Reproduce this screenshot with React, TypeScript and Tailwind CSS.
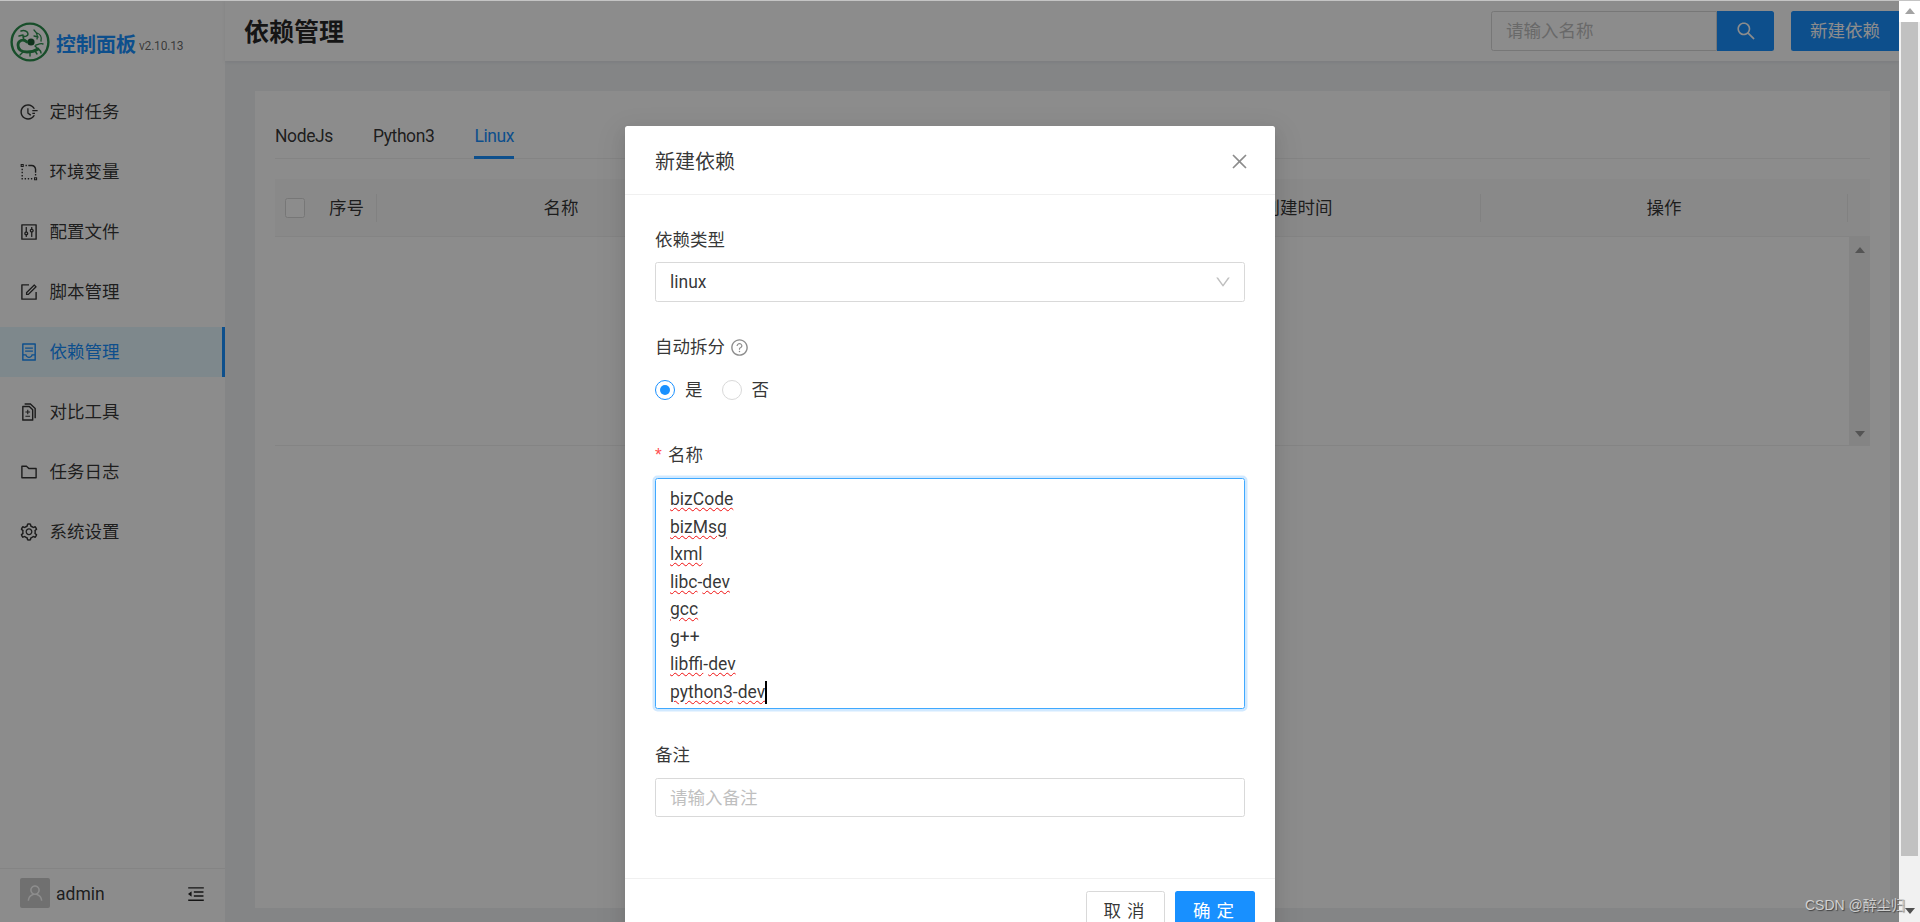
import {
  AiOutlineClose, AiOutlineContainer, AiOutlineControl, AiOutlineDiff, AiOutlineDown,
  AiOutlineFieldTime, AiOutlineFolder, AiOutlineForm, AiOutlineMenuFold, AiOutlineQuestionCircle,
  AiOutlineRadiusSetting, AiOutlineSearch, AiOutlineSetting, AiOutlineUser,
} from "react-icons/ai";

const menu = [
  { label: "定时任务", icon: AiOutlineFieldTime },
  { label: "环境变量", icon: AiOutlineRadiusSetting },
  { label: "配置文件", icon: AiOutlineControl },
  { label: "脚本管理", icon: AiOutlineForm },
  { label: "依赖管理", icon: AiOutlineContainer, active: true },
  { label: "对比工具", icon: AiOutlineDiff },
  { label: "任务日志", icon: AiOutlineFolder },
  { label: "系统设置", icon: AiOutlineSetting },
];

function Logo() {
  return (
    <svg width="40" height="40" viewBox="0 0 40 40" fill="none" stroke="#2c8f4e" strokeLinecap="round">
      <circle cx="20" cy="20" r="18.4" strokeWidth="2.4" />
      <circle cx="21" cy="20" r="3.6" fill="#1d5c33" stroke="none" />
      <path d="M17 20c-4-4-9-1-9 3 0 5 4 7 9 7s8-1 11-3" strokeWidth="2.8" />
      <path d="M11 9c3-1 7 0 7 3 0 2-3 3-5 2 M13 14c0 3 1 4 3 5 M9 14l4-1" strokeWidth="1.5" />
      <path d="M24 8c3 3 4 6 3 9 M27 11c3 1 5 4 4 8 M24 14l4 1" strokeWidth="1.3" />
      <path d="M26 23c3-1 5-2 7-1 M28 27c2 1 3 3 3 4 M13 30l-3 3 M20 30l0 4 M25 29l2 3 M25 24l3 3" strokeWidth="1.4" />
    </svg>
  );
}

function Sidebar() {
  return (
    <aside className="w-[225px] h-full shrink-0 flex flex-col bg-white">
      <div className="h-[87px] pt-[22px] pl-[10px] flex items-start">
        <Logo />
        <span className="ml-[6px] mt-[11px] text-[20px] leading-[24px] font-bold text-[#1890ff]">控制面板</span>
        <span className="ml-[3px] mt-[16px] text-[12px] leading-[16px] tracking-[-0.2px] text-black/60">v2.10.13</span>
      </div>
      <nav className="flex-1">
        {menu.map(m => (
          <div key={m.label}
            className={`h-[50px] mb-[10px] pl-[19px] flex items-center gap-[10.5px] text-[17.5px] ${m.active ? "bg-[#e6f7ff] border-r-[3px] border-[#1890ff] text-[#1890ff]" : "text-black/80"}`}>
            <m.icon size={20} />
            <span>{m.label}</span>
          </div>
        ))}
      </nav>
      <div className="h-[54px] border-t border-[#f0f0f0] pl-[20px] pr-[19px] pt-[9px] flex items-start">
        <div className="w-[30px] h-[30px] rounded-[2px] bg-[#ccc] flex items-center justify-center text-white">
          <AiOutlineUser size={20} />
        </div>
        <span className="ml-[6px] pt-[1px] text-[17.5px] leading-[30px] text-black/80">admin</span>
        <AiOutlineMenuFold size={20} className="ml-auto mt-[6px] text-black/85" />
      </div>
    </aside>
  );
}

function Sep() {
  return <div className="w-px h-[28px] bg-black/[0.06] shrink-0" />;
}

function Arrow({ up, className }: { up?: boolean; className?: string }) {
  return (
    <svg width="10" height="6" viewBox="0 0 10 6" className={className} fill="currentColor">
      <path d={up ? "M5 0l5 6H0z" : "M0 0h10L5 6z"} />
    </svg>
  );
}

function Content() {
  return (
    <main className="flex-1 min-w-0 h-full flex flex-col bg-[#f0f2f5]">
      <header className="h-[61px] shrink-0 bg-white shadow-[0_1px_4px_rgba(0,21,41,0.08)] flex items-center pl-[19px]">
        <h1 className="pt-[4px] text-[25px] font-bold text-black/85">依赖管理</h1>
        <div className="ml-auto flex items-center w-[283px] h-[40px]">
          <div className="flex-1 h-full border border-[#d9d9d9] rounded-l-[2.5px] bg-white pl-[14px] text-[17.5px] leading-[38px] text-[#bfbfbf]">请输入名称</div>
          <div className="w-[57px] h-full bg-[#1890ff] rounded-r-[2.5px] flex items-center justify-center text-white">
            <AiOutlineSearch size={22} />
          </div>
        </div>
        <div className="ml-[17px] w-[108px] h-[40px] shrink-0 bg-[#1890ff] rounded-l-[2.5px] pl-[19px] text-[17.5px] leading-[40px] text-white whitespace-nowrap">新建依赖</div>
      </header>
      <div className="flex-1 pt-[30px] pl-[30px] pr-[9px] pb-[14px]">
        <div className="h-full bg-white px-[20px]">
          <div className="h-[68px] flex items-end gap-[40px] border-b border-[#f0f0f0] text-[17.5px] tracking-[-0.4px]">
            <div className="h-[36px] -mb-px pb-[7px] flex items-center border-b-[3px] border-transparent text-black/80">NodeJs</div>
            <div className="h-[36px] -mb-px pb-[7px] flex items-center border-b-[3px] border-transparent text-black/80">Python3</div>
            <div className="h-[36px] -mb-px pb-[7px] flex items-center border-b-[3px] border-[#1890ff] text-[#1890ff]">Linux</div>
          </div>
          <div className="mt-[20px] h-[58px] bg-[#fafafa] border-b border-[#f0f0f0] flex items-center text-[17.5px] text-black/80">
            <div className="w-[54px] pl-[10px] shrink-0">
              <div className="w-[20px] h-[20px] rounded-[2.5px] border border-[#d9d9d9] bg-white" />
            </div>
            <div className="w-[47px] shrink-0 pt-[2px]">序号</div>
            <Sep />
            <div className="w-[368px] shrink-0 text-center pt-[2px]">名称</div>
            <div className="w-[370px] shrink-0" />
            <div className="w-[365px] shrink-0 text-center pt-[2px]">创建时间</div>
            <Sep />
            <div className="w-[366px] shrink-0 text-center pt-[2px]">操作</div>
            <Sep />
          </div>
          <div className="h-[209px] flex border-b border-[#f0f0f0]">
            <div className="flex-1" />
            <div className="w-[21px] -mt-px h-[210px] bg-[#f1f1f1] flex flex-col items-center justify-between pt-[11px] pb-[9px] text-[#9a9a9a]">
              <Arrow up />
              <Arrow />
            </div>
          </div>
        </div>
      </div>
    </main>
  );
}

function Label({ children, className }: { children: React.ReactNode; className?: string }) {
  return <div className={`h-[27px] pt-[2px] flex items-center text-[17.5px] text-black/80 ${className ?? ""}`}>{children}</div>;
}

function Squiggle({ children }: { children: React.ReactNode }) {
  return <span className="underline decoration-wavy decoration-[#f01010] decoration-[1.2px] underline-offset-[2px]">{children}</span>;
}

function Modal() {
  return (
    <div className="absolute left-[625px] top-[126px] w-[650px] bg-white rounded-[2.5px] shadow-[0_3px_6px_-4px_rgba(0,0,0,0.12),0_6px_16px_rgba(0,0,0,0.08),0_9px_28px_8px_rgba(0,0,0,0.05)]">
      <div className="h-[69px] border-b border-[#f0f0f0] pl-[30px] pr-[25px] flex items-center justify-between">
        <span className="pt-[3px] text-[20px] text-black/80">新建依赖</span>
        <AiOutlineClose size={21} className="mt-[2px] text-black/45" />
      </div>
      <div className="px-[30px] pt-[31px]">
        <Label className="mb-[9px]">依赖类型</Label>
        <div className="h-[40px] border border-[#d9d9d9] rounded-[2.5px] pl-[14px] pr-[12px] flex items-center justify-between text-[17.5px] text-black/80">
          <span className="pt-[1px]">linux</span>
          <AiOutlineDown size={18} className="text-black/25" />
        </div>

        <Label className="mt-[31px] mb-[10px]">
          自动拆分
          <AiOutlineQuestionCircle size={19} className="ml-[5px] text-black/45" />
        </Label>
        <div className="h-[40px] flex items-center text-[17.5px] text-black/80">
          <div className="w-[20px] h-[20px] rounded-full border border-[#1890ff] flex items-center justify-center">
            <div className="w-[10px] h-[10px] rounded-full bg-[#1890ff]" />
          </div>
          <span className="ml-[10px]">是</span>
          <div className="ml-[19px] w-[20px] h-[20px] rounded-full border border-[#d9d9d9]" />
          <span className="ml-[10px]">否</span>
        </div>

        <Label className="mt-[31px] mb-[10px]">
          <span className="text-[#ff4d4f] w-[13px] text-[17.5px] [font-family:'Liberation_Sans',sans-serif]">*</span>
          名称
        </Label>
        <div className="h-[231px] border border-[#40a9ff] rounded-[2.5px] shadow-[0_0_0_2.5px_rgba(24,144,255,0.2)] pl-[14px] pt-[7px] text-[17.5px] leading-[27.5px] text-black/80">
          <div><Squiggle>bizCode</Squiggle></div>
          <div><Squiggle>bizMsg</Squiggle></div>
          <div><Squiggle>lxml</Squiggle></div>
          <div><Squiggle>libc</Squiggle>-<Squiggle>dev</Squiggle></div>
          <div><Squiggle>gcc</Squiggle></div>
          <div>g++</div>
          <div><Squiggle>libffi</Squiggle>-<Squiggle>dev</Squiggle></div>
          <div className="flex items-center">
            <span><Squiggle>python3</Squiggle>-<Squiggle>dev</Squiggle></span>
            <span className="w-[2px] h-[23px] bg-black" />
          </div>
        </div>

        <Label className="mt-[32px] mb-[10px]">备注</Label>
        <div className="h-[39px] border border-[#d9d9d9] rounded-[2.5px] pl-[14px] text-[17.5px] leading-[39px] text-[#bfbfbf]">请输入备注</div>
      </div>
      <div className="mt-[61px] border-t border-[#f0f0f0] pt-[12px] pr-[20px] pb-[12px] flex justify-end gap-[10px] text-[17.5px]">
        <div className="w-[79px] h-[40px] border border-[#d9d9d9] rounded-[2.5px] pl-[3px] leading-[38px] text-center text-black/80 tracking-[6px]">取消</div>
        <div className="w-[80px] h-[40px] bg-[#1890ff] rounded-[2.5px] pl-[3px] leading-[40px] text-center text-white tracking-[6px]">确定</div>
      </div>
    </div>
  );
}

export default function App() {
  return (
    <div className="relative w-full h-[922px] overflow-hidden flex [font-family:Roboto,'Noto_Sans_CJK_SC',sans-serif]">
      <div className="relative w-[1899px] h-full shrink-0 overflow-hidden flex">
        <Sidebar />
        <Content />
        <div className="absolute inset-0 bg-black/45" />
        <Modal />
      </div>
      {/* page scrollbar */}
      <div className="flex-1 h-full bg-[#f1f1f1] flex flex-col">
        <div className="h-[22px] bg-white flex items-center justify-center text-[#a3a3a3]">
          <Arrow up />
        </div>
        <div className="h-[834px] ml-[2px] mr-[2px] bg-[#c1c1c1]" />
        <div className="flex-1 flex items-end justify-center pb-[8px] text-[#505050]">
          <Arrow />
        </div>
      </div>
      <div className="absolute top-0 left-0 right-0 h-px bg-[#c4c4c4]" />
      <div className="absolute left-[1805px] top-[896px] text-[14px] leading-[18px] whitespace-nowrap text-[#d0d0d0] [text-shadow:1px_1px_1px_rgba(0,0,0,0.5)] [font-family:'Liberation_Sans','Noto_Sans_CJK_SC',sans-serif]">CSDN @醉尘归</div>
    </div>
  );
}
